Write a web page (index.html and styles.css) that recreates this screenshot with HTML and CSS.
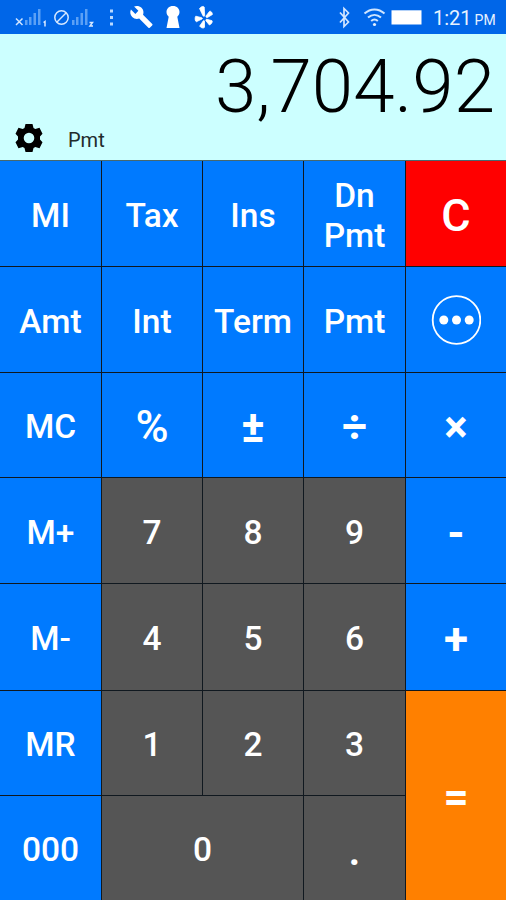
FILE: index.html
```html
<!DOCTYPE html>
<html lang="en">
<head>
<meta charset="utf-8">
<title>Loan Calculator</title>
<link rel="stylesheet" href="styles.css">
</head>
<body>
<div class="app">
  <header class="status">
    <svg class="status-left" width="230" height="34" viewBox="0 0 230 34" fill="#fff">
      <path d="M16 18.500l6.500 6.500M22.500 18.500l-6.500 6.500" stroke="#cfe4ff" stroke-width="1.500"/>
      <g fill="#5ba0f5">
        <path d="M25 20h2.500v5H25zM29 17h2.500v8H29zM33.500 13h2.500v12h-2.500zM38 9h2.500v16H38z"/>
        <path d="M72 20h2.500v5H72zM76 17h2.500v8H76zM80.500 13h2.500v12h-2.500zM85 9h2.500v16H85z"/>
      </g>
      <path d="M43.500 22.500l1.500-1v5M89.500 22.500h3l-2.500 3.500h3" fill="none" stroke="#d6e8ff" stroke-width="1.500"/>
      <circle cx="61.500" cy="17.500" r="6.700" fill="none" stroke="#d6e8ff" stroke-width="1.500"/>
      <path d="M57 22l9-9" stroke="#d6e8ff" stroke-width="1.500"/>
      <g fill="#b9d9ff"><rect x="110" y="9.500" width="3" height="3"/><rect x="110" y="16" width="3" height="3"/><rect x="110" y="22.500" width="3" height="3"/></g>
      <path transform="translate(129.300 4.800) scale(1.010)" d="M22.700 19l-9.100-9.100c.9-2.300.4-5-1.500-6.900-2-2-5-2.400-7.400-1.300L9 6 6 9 1.600 4.700C.4 7.100.9 10.100 2.900 12.100c1.900 1.900 4.600 2.400 6.900 1.500l9.100 9.100c.4.400 1 .4 1.400 0l2.300-2.300c.5-.4.500-1.100.1-1.400z"/>
      <path d="M173 6c4 0 6.500 2.700 6.500 6 0 2-1 3.700-2.200 4.700L179.500 28h-13l2.200-11.300c-1.200-1-2.200-2.700-2.200-4.700 0-3.300 2.500-6 6.500-6z"/>
      <g stroke="#fff" stroke-width=".8" stroke-linejoin="round">
        <path d="M199.500 8.500c1.500-2 4-2.700 4.700-1.500l.5 8.500c-.2 1.200-1.300 1-1.700.2z"/>
        <path d="M206 16l3.600-4.700c1.200-.6 2.900 1.500 2.800 3.200l-5 3c-1 .2-1.800-.5-1.400-1.500z"/>
        <path d="M207 19.300l5 1.400c1 .9-.9 3.900-2.600 4.300l-3.500-4.300c-.4-.8.200-1.500 1.100-1.400z"/>
        <path d="M204.500 21.300v6c-1 1.500-4 .4-4.800-1.200l3.500-5.200c.6-.6 1.300-.3 1.300.4z"/>
        <path d="M202 19l-5.600 2.700c-1.300-.1-1.800-4.200-.6-5.500l5.900 1.500c.8.300.9 1 .3 1.300z"/>
      </g>
    </svg>
    <svg class="status-right" width="92" height="34" viewBox="0 0 92 34">
      <path d="M6 12.500l8.500 9.500-4.500 4.500V8.500l4.500 4.500L6 22.500" fill="none" stroke="#d2e6ff" stroke-width="1.700"/>
      <g fill="none" stroke="#cfe5ff" stroke-width="2">
        <path d="M30.500 13.500c6-5.500 14-5.500 20 0"/><path d="M34 17.500c4-3.500 9-3.500 13 0"/><path d="M37.200 21c2-1.800 4.600-1.800 6.600 0"/>
      </g>
      <circle cx="40.500" cy="24.500" r="1.600" fill="#e2f0ff"/>
      <rect x="57.500" y="10.300" width="30" height="14.200" fill="#fff"/>
    </svg>
    <span class="clock">1:21</span><span class="meridiem">PM</span>
  </header>

  <section class="display">
    <div class="value">3,704.92</div>
    <div class="info">
      <svg width="28" height="30" viewBox="0 0 28 30">
        <path fill-rule="evenodd" d="M10.500 1h7l1 4 1.800 1L24.500 4.700l3 6L25 13.500v3l2.500 2.800-3 6-4.200-1.300-1.800 1-1 4h-7l-1-4-1.800-1-4.200 1.300-3-6L3 16.500v-3L.5 10.700l3-6L7.700 6l1.800-1zM14 9.700a5.300 5.300 0 1 0 0 10.600a5.300 5.300 0 1 0 0-10.600z"/>
      </svg>
      <span class="mode">Pmt</span>
    </div>
  </section>

  <main class="keys">
    <button class="key">MI</button><button class="key">Tax</button><button class="key">Ins</button><button class="key">Dn<br>Pmt</button><button class="key clear">C</button>
    <button class="key">Amt</button><button class="key">Int</button><button class="key">Term</button><button class="key">Pmt</button>
    <button class="key"><svg width="50" height="50" viewBox="0 0 50 50" fill="#fff"><circle cx="25.500" cy="25" r="23.800" fill="none" stroke="#fff" stroke-width="1.800"/><circle cx="12.800" cy="25" r="4.500"/><circle cx="25.500" cy="25" r="4.500"/><circle cx="38.200" cy="25" r="4.500"/></svg></button>
    <button class="key">MC</button><button class="key percent">%</button><button class="key op">±</button><button class="key op">÷</button><button class="key op">×</button>
    <button class="key">M+</button><button class="key num">7</button><button class="key num">8</button><button class="key num">9</button><button class="key op">-</button>
    <button class="key">M-</button><button class="key num">4</button><button class="key num">5</button><button class="key num">6</button><button class="key op">+</button>
    <button class="key">MR</button><button class="key num">1</button><button class="key num">2</button><button class="key num">3</button><button class="key op equals">=</button>
    <button class="key">000</button><button class="key num zero">0</button><button class="key num point">.</button>
  </main>
</div>
</body>
</html>
```
FILE: styles.css
```css
* { box-sizing: border-box; }
body { margin: 0; font-family: Roboto, "Liberation Sans", sans-serif; }
.app { width: 506px; height: 900px; display: flex; flex-direction: column; overflow: hidden; }

.status {
  height: 34px;
  flex: none;
  display: flex;
  background: #0066e8;
  color: #e6f2ff;
  line-height: 34px;
}
.status svg { display: block; flex: none; }
.status-right { margin-left: 104px; }
.clock { font-size: 20px; margin-left: 7px; padding-top: 1px; }
.meridiem { font-size: 14px; margin-left: 3px; padding-top: 3px; }

.display {
  height: 127px;
  flex: none;
  display: flex;
  flex-direction: column;
  background: #ccffff;
  border-bottom: 1px solid #47686e;
  color: #000;
}
.value {
  height: 89px;
  padding: 9px 11px 0 0;
  text-align: right;
  font-size: 74.5px;
  line-height: 88px;
  font-weight: 300;
}
.info { display: flex; align-items: center; height: 30px; padding-left: 15px; }
.mode { margin: 3px 0 0 25px; font-size: 20px; color: #222c2c; }

.keys {
  flex: 1;
  display: grid;
  grid-template-columns: 101px 100px 100px 101px 100px;
  grid-template-rows: 105px 105px 104px 105px 106px 104px 104px;
  gap: 1px;
  background: #10181f;
}
.key {
  display: flex;
  align-items: center;
  justify-content: center;
  margin: 0;
  padding: 4px 0 0;
  border: 0;
  background: #007aff;
  color: #fff;
  font: 500 33.5px/40px Roboto, "Liberation Sans", sans-serif;
}
.key svg { margin-top: -3px; }
.num { background: #555; }
.op, .clear, .percent, .point { font-size: 45px; padding-top: 4px; }
.op { font-size: 44px; font-weight: 700; }
.equals { background: #ff8000; grid-row: span 2; padding-top: 2px; }
.clear { background: #f00; }
.zero { grid-column: span 2; }
```
